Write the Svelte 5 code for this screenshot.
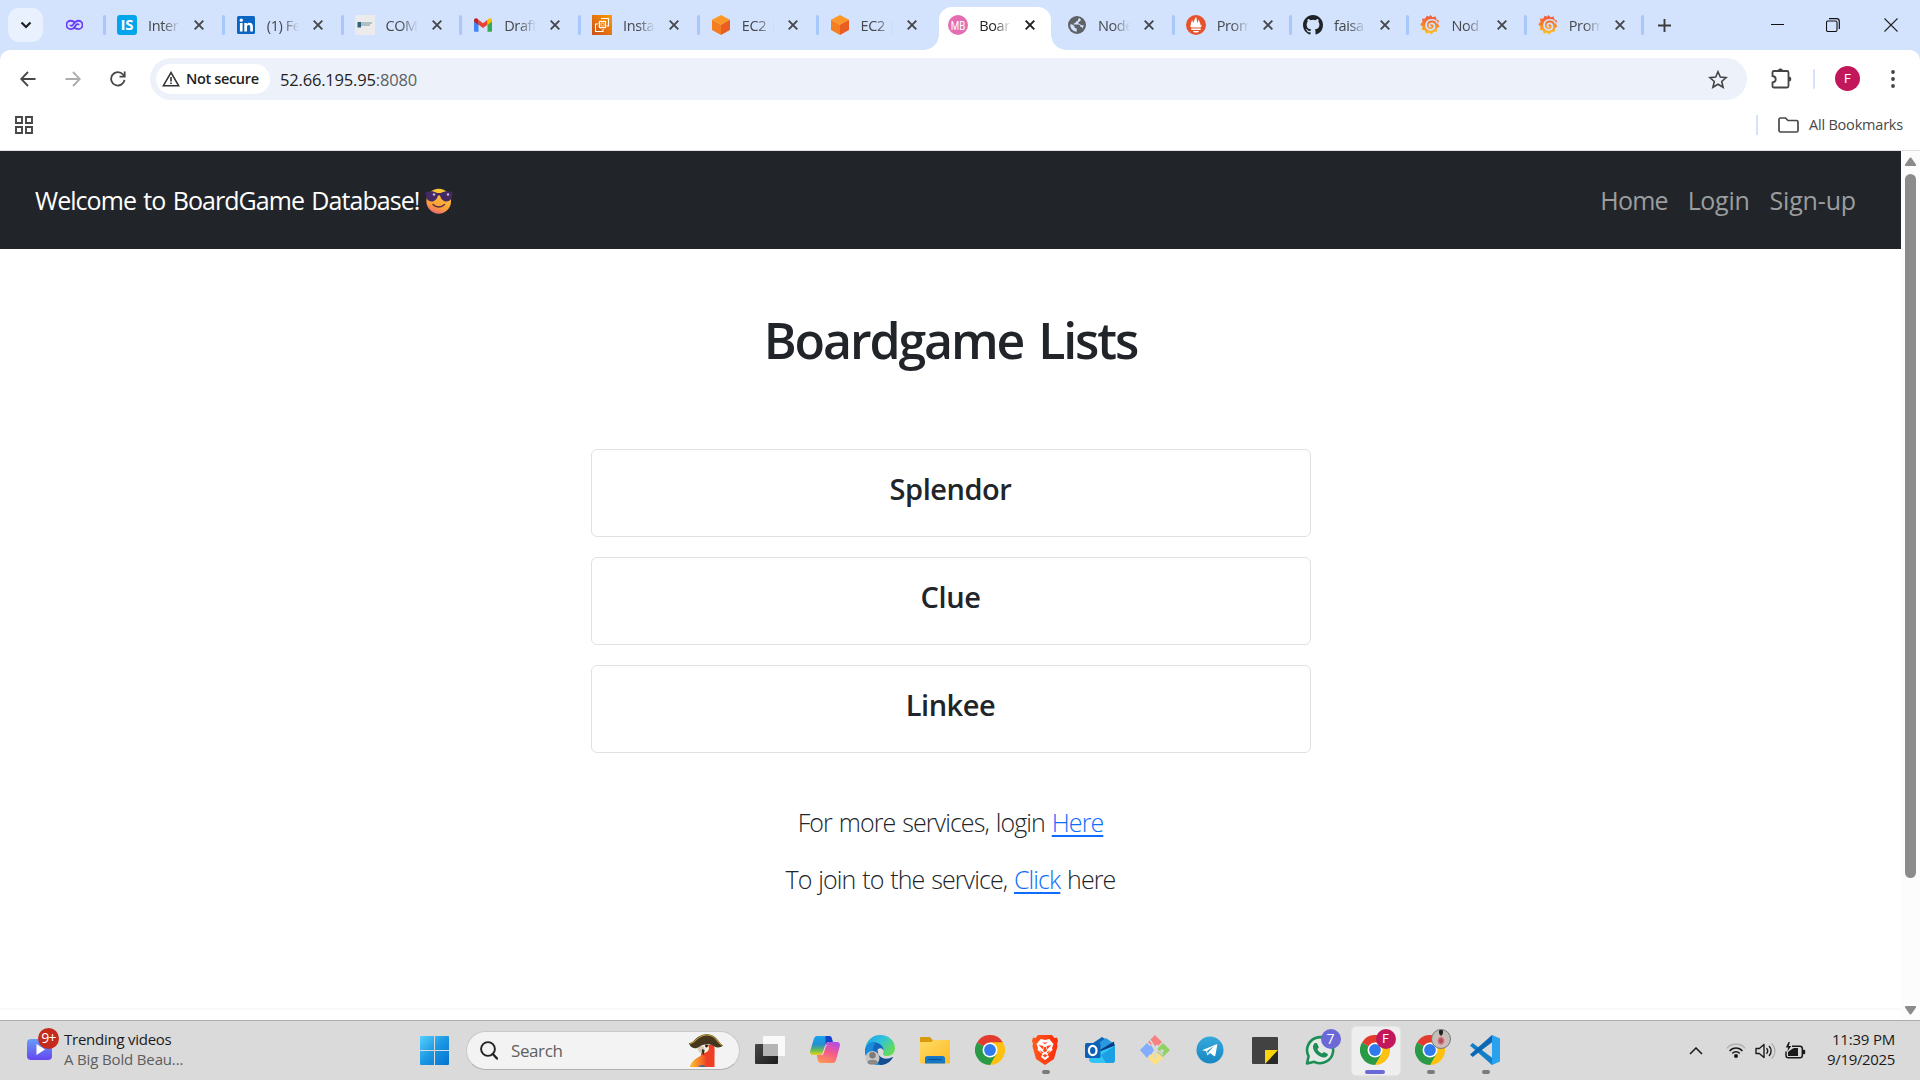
<script>
  const tabs = [
    { icon: 'is', title: 'Inter' },
    { icon: 'linkedin', title: '(1) Fe' },
    { icon: 'com', title: 'COM' },
    { icon: 'gmail', title: 'Draft' },
    { icon: 'insta', title: 'Insta' },
    { icon: 'ec2', title: 'EC2 |' },
    { icon: 'ec2', title: 'EC2 |' },
    { icon: 'mb', title: 'Boar', active: true },
    { icon: 'globe', title: 'Node', plain: true },
    { icon: 'prom', title: 'Prom' },
    { icon: 'github', title: 'faisa' },
    { icon: 'grafana', title: 'Nod' },
    { icon: 'grafana', title: 'Prom' }
  ];
  const narrowIcons = ['linkedin', 'gmail', 'ec2', 'globe'];
  const games = ['Splendor', 'Clue', 'Linkee'];
  const apps = [
    { icon: 'taskview' },
    { icon: 'copilot' },
    { icon: 'edge' },
    { icon: 'explorer' },
    { icon: 'chrome' },
    { icon: 'brave', running: true },
    { icon: 'outlook' },
    { icon: 'git' },
    { icon: 'telegram' },
    { icon: 'notes' },
    { icon: 'whatsapp', badge: '7', kind: 'count' },
    { icon: 'chrome', badge: 'F', kind: 'profile', active: true },
    { icon: 'chrome', badge: '', kind: 'photo', running: true },
    { icon: 'vscode', running: true }
  ];
</script>

{#snippet favicon(name)}
  <svg class="fav" viewBox={narrowIcons.includes(name) ? '-1 0 20 20' : '0 0 20 20'}>
    {#if name === 'is'}
      <rect width="20" height="20" rx="3" fill="#00a5ec" />
      <text x="10" y="15.3" class="is" text-anchor="middle">IS</text>
    {:else if name === 'linkedin'}
      <rect y="1" width="18" height="18" rx="1.5" fill="#0a66c2" />
      <circle cx="4.3" cy="5.2" r="1.6" fill="#fff" />
      <path d="M2.9 8h2.7v8.5H2.9zM7.3 8h2.6v1.2c1.4-2.3 6-2 6 2.2v5.1h-2.7v-4.6c0-2.5-3.2-2.4-3.2 0v4.6H7.3z" fill="#fff" />
    {:else if name === 'com'}
      <rect width="20" height="20" fill="#ebebeb" />
      <path d="M2.5 7h3.5v5.500h-3.500z" fill="#2d617d" />
      <path d="M6 8h11M6 10h9" stroke="#75919f" stroke-width="1" />
    {:else if name === 'gmail'}
      <path d="M0 4.5v11.2q0 1 1 1h3.5V8z" fill="#4285f4" />
      <path d="M18 4.5v11.2q0 1-1 1h-3.5V8z" fill="#34a853" />
      <path d="M4.5 4.8V9.8L9 13l4.5-3.2v-5L9 8.2z" fill="#ea4335" />
      <path d="M0 5.500v1L4.500 10V4.800L3.300 3.800C2 2.800 0 3.600 0 5.500" fill="#c5221f" />
      <path d="M18 5.500v1L13.500 10V4.800l1.200-1C16 2.800 18 3.600 18 5.500" fill="#fbbc04" />
    {:else if name === 'insta'}
      <rect width="20" height="20" fill="url(#awsGrad)" />
      <path d="M7.500 6.500h6v6h-6zM9 3.500h7.500V11h-2M6 9H3.500v7.500H11V14" fill="none" stroke="#fff" stroke-width="1.100" />
      <path d="M9 8h3v3H9zM9 5v1.500M12 5v1.500M9 12.500V14M12 12.500V14M6 8h1.500M6 11h1.500" fill="none" stroke="#fde3c3" stroke-width=".8" />
    {:else if name === 'ec2'}
      <path d="M9 0l9 4.800L9 9.800 0 4.800z" fill="#fd9827" />
      <path d="M0 4.800l9 5V20l-9-5z" fill="#f57f20" />
      <path d="M18 4.800l-9 5V20l9-5z" fill="#ea5f1f" />
    {:else if name === 'mb'}
      <circle cx="10" cy="10" r="10" fill="#e56db1" />
      <text x="10" y="14.700" class="mb" text-anchor="middle" textLength="14.500" lengthAdjust="spacingAndGlyphs">MB</text>
    {:else if name === 'globe'}
      <circle cx="9" cy="10" r="9" fill="#5f6368" />
      <path d="M11.500 3.200c-1 .3-1.800 1-1.500 2-.2 1.200-2 .8-2.200 1.900C7.600 8.400 5.500 8 5.500 9.500h5c1.500 0 2 1.200 1.800 2.300 1.200 0 2 .5 2 1.700.8-1 1.300-2.200 1.300-3.500-1.400.6-2.600.3-3.300-.5-.8-1-2-.6-2-1.700 0-1.200 1.300-1 2-1.700.6-.7.800-1.800-.8-2.900M2.300 9.300c2.600.2 4.300 1.400 4.300 3 0 .9.900.8 1.700 1 .9.300.4 2 .3 3.500C5 16.500 2 13.500 2.300 9.300" fill="#d3e3fd" />
    {:else if name === 'prom'}
      <circle cx="10" cy="10" r="10" fill="#e6522c" />
      <path d="M5 10.500C4.300 8 5.800 7 6 5c.8.800 1 2 .9 3C8 6.500 8.300 4.500 10 1.900c1 2 .6 4 1.700 6.100.5-1.100.2-2.500 1.200-3.600-.1 2.400 2.100 3.600 1.600 6.100l1.500-.4c-.2 1-.7 1.700-1.300 2.400H5.300C4.700 11.900 4.200 11.200 4 10zM5.300 13.500h9.400v1.500H5.300zM7 16h6c-.4 2.100-5.600 2.100-6 0" fill="#fff" />
    {:else if name === 'github'}
      <path transform="scale(1.250)" fill="#1f2328" d="M8 0C3.580 0 0 3.580 0 8c0 3.540 2.290 6.530 5.470 7.590.4.070.55-.17.550-.38 0-.19-.01-.82-.01-1.490-2.010.37-2.530-.49-2.690-.94-.09-.23-.48-.94-.82-1.130-.28-.15-.68-.52-.01-.53.630-.01 1.080.58 1.230.82.720 1.210 1.870.87 2.330.66.070-.52.280-.87.510-1.070-1.780-.2-3.640-.89-3.640-3.950 0-.87.310-1.590.82-2.150-.08-.2-.36-1.020.08-2.120 0 0 .67-.21 2.200.82a7.640 7.640 0 0 1 4 0c1.530-1.040 2.200-.82 2.200-.82.440 1.100.16 1.920.08 2.120.51.560.82 1.270.82 2.150 0 3.070-1.870 3.750-3.650 3.950.29.250.54.730.54 1.480 0 1.070-.01 1.930-.01 2.200 0 .21.150.46.550.38A8.010 8.010 0 0 0 16 8c0-4.420-3.580-8-8-8" />
    {:else if name === 'grafana'}
      <path d="M10.500 0l2 2.200 3.300-.8.600 3.200 2.800 1.200-1.300 3 1.600 2.800-2.600 1.800-.1 3.300-3.300.1-1.900 2.900-2.700-1.900-3.100.9-.9-3.100-3.200-.9.900-3L.200 9.200l2.300-2.100L2 3.800l3.300-.3 1.500-2.700 2.400 1z" fill="url(#grafGrad)" />
      <path d="M17.500 8.500C16 3.800 8 3.200 6.300 8.500c-1.300 4.500 2.500 7.300 5.600 6.200 4-1.500 2.900-6.600-.7-6.200-2.600.4-2.300 3.600.1 3.500" fill="none" stroke="#d3e3fd" stroke-width="1.700" />
    {/if}
  </svg>
{/snippet}

{#snippet appIcon(name)}
  <svg class="app-svg" viewBox="0 0 30 30">
    {#if name === 'taskview'}
      <rect y="9" width="23" height="20" rx="1" fill="url(#tvDark)" />
      <rect x="8" y="1" width="22" height="20" rx="1" fill="#fff" fill-opacity=".82" />
      <path d="M8 9h15v12H8z" fill="#b5b5b5" />
    {:else if name === 'copilot'}
      <path d="M7 1h12c2 0 2.500 1 3 3l.8 3h-4c-2 0-3 1-3.500 3l-2.500 7c-.8 2.200-2 3-4 3H3c-2.500 0-3.500-2-2.700-4.500l3.400-11C4.300 2.200 5.300 1 7 1" fill="url(#coBlue)" />
      <path d="M15.500 1H19c2 0 2.500 1 3 3l.8 3H19c-2 0-3 1-3.500 3z" fill="#1742c9" />
      <path d="M23 28H11c-2 0-2.700-1-3.200-3l-1-5H9c2 0 3.200-.8 4-3l2.500-7C16 8 17 7 19 7h8c2.500 0 3.400 2 2.700 4.500l-3.400 12.800C25.700 26.700 25 28 23 28" fill="url(#coPink)" />
      <path d="M16.200 10h1.800c-1 0-2 .8-2.400 2l-2.300 7c-.3.800-1.300 1.200-2 1.200h-1c1.200-.4 2-1 2.500-2.500l2.100-6z" fill="#eee" />
    {:else if name === 'edge'}
      <path d="M0 16C.5 6 7 0 15.300 0 24 0 30 6 30 13c0 5-3.500 8-7.700 8-3.800 0-5-1.500-4-3 1-2-.2-6.500-6-7.500C7 10 3 12 0 16" fill="url(#edgeTop)" />
      <path d="M0 16C1 8.500 7 6.500 11 7.500c4.500 1 8 4.500 7.400 8.300-1-3.300-4-3-5.500-1.500-4 4.500 2 11.500 9 10.500C18 31.500 8 31.500 3.500 25 1 21.500 0 19 0 16" fill="#1267bd" />
      <path d="M0 16C1 8.500 7 6.500 11 7.500 8 10 7.500 15 8.500 19c1 4.500 3.500 8 7 10.900C7 30.500 0 24 0 16" fill="#198bd9" />
      <path d="M13 15c-1.500 5 4 9.500 10 8.500 3-.5 4.500-2.200 5-1.300-2.500 5-7.500 7.800-13 7.800-5-4-6-12-2-15" fill="#124e91" />
      <circle cx="7.500" cy="23" r="7" fill="#c6c6c6" /><circle cx="7.500" cy="20.300" r="3.200" fill="#7e7a78" />
      <path d="M2.500 28v-1c0-3 10-3 10 0v1c-2 2-8 2-10 0" fill="#8c8886" />
    {:else if name === 'explorer'}
      <path d="M0 3q0-1 1-1h9l3 3.500V10H0z" fill="#d99a0b" />
      <path d="M0 8q0-1 1-1h10l3-2h15q1 0 1 1v21.500q0 1-1 1H1q-1 0-1-1z" fill="url(#folderGrad)" />
      <path d="M5 28.500v-5q0-2.500 2.500-2.500h15q2.500 0 2.500 2.500v5z" fill="#1478c7" />
      <path d="M8.500 24.500h13" stroke="#0b4f91" stroke-width="1.200" />
    {:else if name === 'chrome'}
      <path d="M15 15L2 7.500A15 15 0 0 1 28 7.500z" fill="#e33b2e" />
      <path d="M15 15V7.500h13A15 15 0 0 1 15 30z" fill="#fdc210" />
      <path d="M15 15l6.500 3.800L15 30A15 15 0 0 1 2 7.500z" fill="#2a9a47" />
      <path d="M15 7.500h13l-7 9z" fill="#fdc210" />
      <circle cx="15" cy="15" r="7.500" fill="#fff" /><circle cx="15" cy="15" r="5.900" fill="#2f7bed" />
    {:else if name === 'brave'}
      <path d="M8 0h14l2.500 3 2.500-.4L28 6l-1 3 .6 2-3.600 13-9 6-9-6L2.400 11 3 9 2 6l1-3.400L5.500 3z" fill="url(#braveGrad)" />
      <path d="M15 5l4.200-1 4.300 5-1.500 4 .5 2-5 4 1.500 3-4 3-4-3 1.500-3-5-4 .5-2-1.500-4 4.300-5z" fill="#fff" />
      <path d="M8.500 10l5 1-.7 3.200zM21.500 10l-5 1 .7 3.200zM12 7.500L15 9l3-1.500M14 12h2l1 4-2 1.200L13 16zM9.500 15l4 2.500-1.500 1zM20.500 15l-4 2.500 1.500 1zM12.500 20.500L15 19l2.500 1.500L15 22.500z" fill="#ff4518" />
    {:else if name === 'outlook'}
      <path d="M5 10L17 2l13 8v10H5z" fill="#0d65b8" />
      <path d="M15 7l6-4 7 5-13 8z" fill="#299ae0" /><path d="M15 15L29 6.500l1 9L18 21z" fill="#0a3a84" />
      <path d="M4 20l12-4 14-5.500V25q0 3-3 3H9q-5 0-5-4z" fill="#30c5f4" /><path d="M16 20l14-9v14q0 3-3 3h-6z" fill="#1c9fe3" />
      <rect y="8" width="15.500" height="15" rx="1.500" fill="#0f61b5" />
      <ellipse cx="7.700" cy="15.500" rx="3.800" ry="4.600" fill="none" stroke="#fff" stroke-width="2.200" />
    {:else if name === 'git'}
      <path d="M15 0l7 7-4 4-1-2-2 3-3-3-1 1-3-3z" fill="#f58181" />
      <path d="M7 8l3 3 1-1 3 5-3 5-1-1-3 4-7-8z" fill="#82adfd" />
      <path d="M23 8l7 7-7 7-6-5 1-4z" fill="#8fd264" />
      <path d="M15 17l3 3 1-1 4 4-8 7-7-7 4-4z" fill="#fde07f" />
      <path d="M10 5l6 9 7 6M15 13v11" stroke="#d9d9d9" stroke-width="1.500" fill="none" />
      <circle cx="15" cy="13" r="2" fill="#d9d9d9" /><circle cx="22" cy="16" r="1.700" fill="#d9d9d9" /><circle cx="15" cy="22" r="1.700" fill="#d9d9d9" />
    {:else if name === 'telegram'}
      <circle cx="15" cy="15" r="13.500" fill="url(#tgGrad)" />
      <path d="M7 15.200L21.500 9.300q1-.3.800.8L20.300 20.500q-.3 1-1.300.4l-4-3-2 2q-.8.600-1-.4l-.8-3.500zM12 16l7-5-5.500 6-.4 2.500z" fill="#fff" fill-rule="evenodd" />
    {:else if name === 'notes'}
      <path d="M3 2h24q1 0 1 1v25q0 1-1 1H3q-1 0-1-1V3q0-1 1-1" fill="#424242" />
      <path d="M28 15v13q0 1-1 1H15z" fill="#292929" /><path d="M15 15h13L15 29z" fill="#fad60a" />
    {:else if name === 'whatsapp'}
      <path d="M2 28.500l1.600-7.300A13 13 0 1 1 9.300 26.800z" fill="#e4e9e5" stroke="#1c8d55" stroke-width="2.600" stroke-linejoin="round" />
      <path d="M9.500 8l2.500.3 1.800 4-1.400 2c1 2 2.600 3.500 4.700 4.300l1.800-1.600 4 2c.2 2.200-2.200 3.800-4.400 3.500C12.500 21.700 7.500 16 8 11z" fill="#1c8d55" />
    {:else if name === 'vscode'}
      <path d="M0 10.500L2.700 8 25 25l-3 5z" fill="#127fc7" /><path d="M0 19.500L2.700 22 25 5l-3-5z" fill="#0c68b4" />
      <path d="M22 0l8 3.500v23L22 30V0" fill="#28a2ef" />
    {/if}
  </svg>
{/snippet}

<svg class="defs" width="0" height="0">
  <defs>
    <linearGradient id="awsGrad" x1="0" y1="1" x2="1" y2="0"><stop offset="0" stop-color="#c8511b" /><stop offset="1" stop-color="#f90" /></linearGradient>
    <linearGradient id="grafGrad" x1="0" y1="0" x2="0" y2="1"><stop offset="0" stop-color="#f2513b" /><stop offset=".5" stop-color="#f7852d" /><stop offset="1" stop-color="#fdc921" /></linearGradient>
    <linearGradient id="tvDark" x1="0" y1="0" x2="1" y2="1"><stop offset="0" stop-color="#484848" /><stop offset="1" stop-color="#1c1c1c" /></linearGradient>
    <linearGradient id="coBlue" x1="0" y1="0" x2="0" y2="1"><stop offset="0" stop-color="#19a5f0" /><stop offset=".45" stop-color="#258fd0" /><stop offset=".75" stop-color="#67bb55" /><stop offset="1" stop-color="#efd30d" /></linearGradient>
    <linearGradient id="coPink" x1=".7" y1="0" x2=".3" y2="1"><stop offset="0" stop-color="#b64ee4" /><stop offset=".45" stop-color="#f2588e" /><stop offset="1" stop-color="#ff9456" /></linearGradient>
    <linearGradient id="edgeTop" x1="0" y1="0" x2="1" y2=".6"><stop offset="0" stop-color="#1d9de2" /><stop offset=".5" stop-color="#2fc2df" /><stop offset="1" stop-color="#65dc57" /></linearGradient>
    <linearGradient id="folderGrad" x1="0" y1="0" x2="1" y2="1"><stop offset="0" stop-color="#ffdb63" /><stop offset="1" stop-color="#fdbb27" /></linearGradient>
    <linearGradient id="braveGrad" x1="0" y1="0" x2="1" y2="0"><stop offset="0" stop-color="#ff5a1c" /><stop offset="1" stop-color="#fc2c0d" /></linearGradient>
    <linearGradient id="tgGrad" x1="0" y1="0" x2="0" y2="1"><stop offset="0" stop-color="#35a9db" /><stop offset="1" stop-color="#1886c2" /></linearGradient>
    <linearGradient id="winGrad" x1="0" y1="0" x2="29" y2="29" gradientUnits="userSpaceOnUse"><stop offset="0" stop-color="#55d0fd" /><stop offset=".5" stop-color="#1b97e3" /><stop offset="1" stop-color="#0470cf" /></linearGradient>
    <linearGradient id="vidGrad" x1="0" y1="0" x2="0" y2="1"><stop offset="0" stop-color="#669df8" /><stop offset="1" stop-color="#6547ef" /></linearGradient>
    <linearGradient id="faceGrad" x1=".7" y1="0" x2=".3" y2="1"><stop offset="0" stop-color="#ffcf35" /><stop offset=".7" stop-color="#fb9d3b" /><stop offset="1" stop-color="#e8647b" /></linearGradient>
    <linearGradient id="wingGrad" x1="0" y1="0" x2="1" y2="0"><stop offset="0" stop-color="#fbc22b" /><stop offset=".6" stop-color="#f5782a" /><stop offset="1" stop-color="#e93a22" /></linearGradient>
  </defs>
</svg>

<div class="screen">
  <header class="tabstrip">
    <button class="tab-search" aria-label="Search tabs">
      <svg width="12" height="8" viewBox="0 0 12 8"><path d="M1.500 1.500L6 6l4.500-4.500" fill="none" stroke="#1f1f1f" stroke-width="2.200" /></svg>
    </button>
    <div class="pinned">
      <svg width="17" height="12" viewBox="0 0 18 12"><path d="M9.500 3.500C8 2 6.500 1.500 5 1.500a4.400 4.400 0 0 0 0 8.900c3.500 0 4.500-3 6-4.700.8-.9 2.500-.8 2.500.5M8.500 8.300c1.300 1.500 2.800 2.100 4.500 2.100a4.400 4.400 0 0 0 0-8.900C9.500 1.500 8.500 4.500 7 6.200c-.8.900-2.500.8-2.500-.5" fill="none" stroke="#6a3df5" stroke-width="1.900" /></svg>
    </div>
    {#each tabs as tab, i}
      <div class="tab" class:active={tab.active} class:plain={tab.plain} class:narrow={i > 8}>
        <i class="sep"></i>
        {@render favicon(tab.icon)}
        <span class="tab-title">{tab.title}</span>
        <svg class="close" viewBox="0 0 10 10"><path d="M.7.700l8.600 8.600M9.300.700L.7 9.300" stroke="currentColor" stroke-width="1.900" /></svg>
      </div>
    {/each}
    <i class="sep last"></i>
    <svg class="plus" viewBox="0 0 13 13"><path d="M6.500 0v13M0 6.500h13" stroke="#3c3c3c" stroke-width="1.900" /></svg>
    <div class="window-controls">
      <svg width="13" height="13" viewBox="0 0 13 13"><path d="M0 5.500h13" stroke="#111" /></svg>
      <svg width="14" height="14" viewBox="0 0 14 14"><rect x=".5" y="3" width="10.500" height="10.500" rx="1.500" fill="none" stroke="#111" stroke-width="1.100" /><path d="M3 .7h7.500q2.800 0 2.800 2.800V11" fill="none" stroke="#111" stroke-width="1.200" /></svg>
      <svg width="14" height="14" viewBox="0 0 14 14"><path d="M.5.500l13 13M13.500.500l-13 13" stroke="#222" stroke-width="1.100" /></svg>
    </div>
  </header>

  <div class="chrome-bg">
    <div class="toolbar">
      <svg class="nav-ic" viewBox="0 0 16 16"><path d="M15.500 8H1.500M8 1L1.200 8 8 15" fill="none" stroke="#474747" stroke-width="1.800" /></svg>
      <svg class="nav-ic" viewBox="0 0 16 16"><path d="M.5 8h14M8 1l6.800 7L8 15" fill="none" stroke="#adadad" stroke-width="1.800" /></svg>
      <svg class="nav-ic reload" viewBox="0 0 16 16"><path d="M14.500 8.800A6.700 6.700 0 1 1 13 3.500l1.500 1.700M14.700.500v5.200H9.500" fill="none" stroke="#474747" stroke-width="1.800" /></svg>
      <div class="omnibox">
        <div class="chip">
          <svg width="18" height="16" viewBox="0 0 18 16"><path d="M9 1.500L16.700 14.800H1.300z" fill="none" stroke="#333" stroke-width="1.500" /><path d="M9 6v4.500M9 11.500V13" stroke="#333" stroke-width="1.600" /></svg>
          <span>Not secure</span>
        </div>
        <span class="url">52.66.195.95<em>:8080</em></span>
        <svg class="star" viewBox="0 0 20 19"><path d="M10 1.700l2.300 5.400 5.900.5-4.500 3.900 1.400 5.800-5.100-3.100-5.100 3.100 1.400-5.800L1.800 7.600l5.900-.5z" fill="none" stroke="#444" stroke-width="1.600" /></svg>
      </div>
      <svg class="puzzle" viewBox="0 0 21 21"><path d="M1.500 4.500q0-1.500 1.500-1.500h13q1.500 0 1.500 1.500v13.500q0 1.500-1.500 1.500H3Q1.500 19.500 1.500 18v-3.500c4.300-.5 4.300-6 0-6.500z" fill="none" stroke="#444" stroke-width="1.800" /><path d="M6.800 3a2.600 2.600 0 0 1 5.200 0zM17.800 8.500a2.500 2.500 0 0 1 0 5z" fill="#444" /></svg>
      <i class="tool-sep"></i>
      <div class="avatar">F</div>
      <svg class="dots" viewBox="0 0 4 18"><circle cx="2" cy="2" r="1.900" /><circle cx="2" cy="9" r="1.900" /><circle cx="2" cy="16" r="1.900" /></svg>
    </div>
    <div class="bookmarks">
      <svg class="apps-grid" viewBox="0 0 18 18"><path d="M1 1h6v6H1zM11 1h6v6h-6zM1 11h6v6H1zM11 11h6v6h-6z" fill="none" stroke="#474747" stroke-width="1.900" /></svg>
      <i class="bm-sep"></i>
      <svg class="folder" viewBox="0 0 21 16"><path d="M1 2.500Q1 1 2.500 1h5L10 3.500h8.500q1.500 0 1.500 1.500v8.500q0 1.500-1.500 1.500h-16Q1 15 1 13.500z" fill="none" stroke="#474747" stroke-width="1.700" /></svg>
      <span>All Bookmarks</span>
    </div>
  </div>

  <div class="viewport">
    <div class="page">
      <nav class="navbar">
        <div class="brand">
          <span>Welcome to BoardGame Database!</span>
          <svg class="cool" viewBox="0 0 28 26"><ellipse cx="13.700" cy="13.200" rx="12.300" ry="12.500" fill="url(#faceGrad)" />
            <path d="M.5 4.500C4 2.700 9 3.200 12 5h4c3-1.800 8-2.300 11.500-.5 0 5-2 9-6 9-3.500 0-5.500-2.500-6.500-6h-2c-1 3.500-3 6-6.500 6-4 0-6-4-6-9" fill="#432a62" />
            <path d="M8 16.500c3 3.300 8.500 3.300 11.500 0" fill="none" stroke="#533044" stroke-width="1.400" stroke-linecap="round" />
            <circle cx="9" cy="6.500" r="1.200" fill="#cbb9df" /><circle cx="23" cy="6.500" r="1.200" fill="#cbb9df" /></svg>
        </div>
        <div class="links"><a href="#home" class="l-home">Home</a><a href="#login">Login</a><a href="#signup" class="l-sign">Sign-up</a></div>
      </nav>
      <main>
        <h1>Boardgame Lists</h1>
        <div class="cards">
          {#each games as game}
            <div class="card">{game}</div>
          {/each}
        </div>
        <p class="lead first">For more services, login <a href="#here">Here</a></p>
        <p class="lead second">To join to the service, <a href="#click">Click</a> here</p>
      </main>
      <div class="page-end"></div>
    </div>
    <div class="scrollbar">
      <svg width="13" height="10" viewBox="0 0 13 10"><path d="M6.500.500q.7 0 1.300 1L12 7.500q.7 1.500-1 1.500H2Q.3 9 1 7.500l4.200-6q.6-1 1.300-1" fill="#8b8b8b" /></svg>
      <div class="thumb"></div>
      <svg class="down" width="13" height="10" viewBox="0 0 13 10"><path d="M6.500 9.500q.7 0 1.300-1L12 2.500Q12.700 1 11 1H2Q.3 1 1 2.500l4.200 6q.6 1 1.300 1" fill="#8b8b8b" /></svg>
    </div>
  </div>

  <footer class="taskbar">
    <div class="widget">
      <div class="video">
        <svg width="25" height="21" viewBox="0 0 25 21"><rect width="25" height="21" rx="4" fill="url(#vidGrad)" /><path d="M9.500 5l8.500 5.500L9.500 16z" fill="#fff" /></svg>
        <b>9+</b>
      </div>
      <div class="news"><span class="n1">Trending videos</span><span class="n2">A Big Bold Beau...</span></div>
    </div>
    <svg class="start" viewBox="0 0 29 29"><path d="M1 0h13v14H0V1q0-1 1-1M15 0h13q1 0 1 1v13H15zM0 15h14v14H1q-1 0-1-1zM15 15h14v13q0 1-1 1H15z" fill="url(#winGrad)" /></svg>
    <div class="search">
      <svg class="mag" viewBox="0 0 18 19"><circle cx="8" cy="8" r="6.900" fill="none" stroke="#222" stroke-width="1.900" /><path d="M12.800 13l4.200 4.500" stroke="#222" stroke-width="2.400" stroke-linecap="round" /></svg>
      <span>Search</span>
      <svg class="parrot" viewBox="0 0 34 34">
        <path d="M12 11h13c1 4 .5 8 .5 12V33H10C6 33 3 32 1 33c2-6 7-8 11-11z" fill="#ed3f24" />
        <path d="M1 33c2-7 7-9 12-12 6 1 7 6 4 12z" fill="url(#wingGrad)" />
        <path d="M9 32.500c3-2 6-1.500 8 .5z" fill="#2362a9" />
        <path d="M12 11c3-1.500 8-1 8 3 0 3-3 5-6 5-3-1-3-6-2-8" fill="#f6eee0" />
        <path d="M8.500 14c1-3 6-3 7 0 .5 3-.5 4.500-1 6-3-.5-6-3-6-6" fill="#d8ccb4" /><path d="M13 15l2.500 1-.7 5-2-2z" fill="#3b332a" />
        <circle cx="17.500" cy="12" r="1.400" fill="#1d1a19" />
        <path d="M0 9c5 1 6-8 17.500-8.700C28 0 29 9 34 11.500c-3 2.500-6 2.500-9 .7-4-2.700-11-2.700-15 .7C5 16 1 13 0 9" fill="#44361f" />
        <path d="M.7 9.500C6 10 7.500 1.500 17.500 1 27 .800 28 9 33 11.400" fill="none" stroke="#bc9a32" stroke-width="1.100" />
      </svg>
    </div>
    <div class="apps">
      {#each apps as app}
        <div class="app" class:current={app.active}>
          {@render appIcon(app.icon)}
          {#if app.kind}<span class="badge {app.kind}">{app.badge}</span>{/if}
          {#if app.active || app.running}<i class="indicator"></i>{/if}
        </div>
      {/each}
    </div>
    <div class="tray">
      <svg width="14" height="8" viewBox="0 0 14 8"><path d="M1 7l6-6 6 6" fill="none" stroke="#1a1a1a" stroke-width="1.500" /></svg>
      <svg class="wifi" width="20" height="16" viewBox="0 0 20 16"><circle cx="10" cy="13" r="2" fill="#1a1a1a" /><path d="M6.300 10.500a5 5 0 0 1 7.400 0M3.600 8a8.500 8.500 0 0 1 12.800 0" fill="none" stroke="#1a1a1a" stroke-width="1.500" /><path d="M.8 5.300a12.300 12.300 0 0 1 18.400 0" fill="none" stroke="#aaa" stroke-width="1.200" /></svg>
      <svg class="vol" width="21" height="18" viewBox="0 0 21 18"><path d="M1 6.500h3.300L9 2.500v13l-4.700-4H1z" fill="none" stroke="#1a1a1a" stroke-width="1.400" stroke-linejoin="round" /><path d="M11.500 6.300a4 4 0 0 1 0 5.400M14 4a7 7 0 0 1 0 10" fill="none" stroke="#1a1a1a" stroke-width="1.400" /><path d="M16.500 1.500a10 10 0 0 1 0 15" fill="none" stroke="#aaa" stroke-width="1.200" /></svg>
      <svg class="bat" width="21" height="18" viewBox="0 0 21 18"><path d="M7 4.200h8q2.300 0 2.300 2.300v7q0 2.300-2.300 2.300H3.300Q1 15.800 1 13.500V9.500" fill="none" stroke="#1a1a1a" stroke-width="1.500" /><path d="M3 10l4-3L9 6h4v8H3zM18 7.800h1.200q1 0 1 1v2.500q0 1-1 1H18zM3.500 0L.8 5.500h2.400L2.300 9.500 6.300 4H3.700l1.200-4z" fill="#1a1a1a" /></svg>
      <div class="clock"><span class="c1">11:39 PM</span><span class="c2">9/19/2025</span></div>
    </div>
  </footer>
</div>

<style>
  :global(body) { margin: 0; overflow: hidden; }
  .screen { width: 1920px; height: 1080px; display: flex; flex-direction: column; background: #fff; font-family: 'Open Sans', 'Noto Sans', sans-serif; overflow: hidden; }
  .screen * { box-sizing: border-box; }
  svg { display: block; flex: none; }
  .defs { position: absolute; }

  .tabstrip { height: 50px; background: #d3e3fd; display: flex; align-items: center; flex: none; }
  .tab-search { width: 35px; height: 34px; margin-left: 8px; padding: 0; border: 0; border-radius: 11px; background: #e9f0fe; display: grid; place-items: center; }
  .pinned { width: 60px; padding-left: 23px; flex: none; }
  .tab { width: 118.750px; height: 50px; flex: none; display: flex; align-items: center; color: #45474a; position: relative; }
  .tab.narrow { width: 117.350px; }
  .sep { width: 3px; height: 20px; border-radius: 2px; background: #a8c7fa; flex: none; margin-bottom: 1px; }
  .tab.active .sep, .tab.plain .sep { background: transparent; }
  .fav { width: 20px; height: 20px; margin-left: 11px; z-index: 1; }
  .is { font: 700 15px 'Open Sans', sans-serif; fill: #fff; }
  .mb { font: 400 13px Roboto, sans-serif; fill: #fff; }
  .tab-title { width: 42px; margin: 1px 0 0 11px; flex: none; white-space: nowrap; font-size: 14.500px; letter-spacing: -.4px; line-height: 20px; z-index: 1; mask-image: linear-gradient(to right, #000 15px, transparent 32px); }
  .close { width: 10px; height: 10px; margin-left: 4px; z-index: 1; }
  .tab.active { color: #1f1f1f; }
  .tab.active::before { content: ''; position: absolute; left: 4.750px; top: 7px; width: 112px; height: 43px; border-radius: 13px 13px 0 0; background: #fff; }
  .tab.active::after { content: ''; position: absolute; left: -10px; bottom: 0; width: 142px; height: 15px; background: radial-gradient(circle at 0 0, transparent 14.500px, #fff 15px) left / 15px 15px no-repeat, radial-gradient(circle at 100% 0, transparent 14.500px, #fff 15px) right / 15px 15px no-repeat; }
  .plus { width: 13px; height: 13px; margin-left: 14px; }
  .window-controls { margin-left: auto; display: flex; gap: 44px; padding-right: 22px; align-items: center; }
  .window-controls svg:first-child { margin-right: -2px; }

  .chrome-bg { height: 101px; flex: none; background: #d3e3fd; border-bottom: 1px solid #dfe1e4; }
  .toolbar { height: 58px; background: #fff; border-radius: 10px 10px 0 0; display: flex; align-items: center; padding: 0 26px 0 20px; }
  .nav-ic { width: 16px; height: 16px; margin-right: 29px; }
  .reload { margin-right: 24px; }
  .omnibox { width: 1597px; height: 42px; border-radius: 21px; background: #ecf1fa; display: flex; align-items: center; padding: 0 19px 0 6px; }
  .chip { width: 114px; height: 30px; border-radius: 15px; background: #fff; display: flex; align-items: center; gap: 6px; padding: 0 0 1px 6px; font-size: 14.500px; font-weight: 600; color: #1f1f1f; letter-spacing: -.35px; white-space: nowrap; }
  .url { margin-left: 10px; font-size: 16.500px; letter-spacing: -.18px; color: #1f1f1f; white-space: nowrap; }
  .url em { font-style: normal; color: #5b5e63; }
  .star { width: 20px; height: 19px; margin-left: auto; }
  .puzzle { width: 21px; height: 21px; margin-left: 24px; margin-bottom: 1px; }
  .tool-sep { width: 2px; height: 20px; background: #d3e3fd; margin-left: 21px; border-radius: 1px; }
  .avatar { width: 25px; height: 25px; border-radius: 50%; background: #c2185b; color: #fff; display: grid; place-items: center; font: 13px Roboto, sans-serif; margin: 0 0 2px 20px; }
  .dots { width: 4px; height: 18px; margin: 0 -1px 1px auto; fill: #444; }
  .bookmarks { height: 42px; background: #fff; display: flex; align-items: center; padding: 0 17px 8px 15px; font-size: 14.500px; color: #474747; letter-spacing: -.2px; }
  .bookmarks span { margin-top: -1px; }
  .apps-grid { width: 18px; height: 18px; }
  .bm-sep { width: 2px; height: 20px; background: #d3e3fd; margin-left: auto; }
  .folder { width: 21px; height: 16px; margin: 0 10px 0 20px; }

  .viewport { height: 869px; display: flex; flex: none; }
  .page { width: 1901px; height: 869px; display: flex; flex-direction: column; }
  .navbar { height: 98px; background: #212529; display: flex; align-items: center; justify-content: space-between; padding: 0 45px 0 35px; flex: none; font-size: 25px; }
  .brand { display: flex; align-items: center; gap: 6px; color: #fff; letter-spacing: -.95px; word-spacing: 1.800px; white-space: nowrap; }
  .cool { width: 28px; height: 26px; margin-top: 2px; }
  .links { display: flex; gap: 20px; }
  .links a { color: #9b9d9e; text-decoration: none; letter-spacing: -.3px; }
  .links .l-home { letter-spacing: -.85px; }
  .links .l-sign { letter-spacing: -.15px; }
  main { display: flex; flex-direction: column; align-items: center; color: #212529; }
  h1 { margin: 61px 0 0; height: 60px; line-height: 60px; font-size: 50px; font-weight: 600; letter-spacing: -2.100px; word-spacing: 4px; white-space: nowrap; }
  .cards { margin-top: 79px; display: flex; flex-direction: column; gap: 20px; }
  .card { width: 720px; height: 88px; border: 1px solid #dee2e6; border-radius: 6px; padding-top: 21px; text-align: center; line-height: 36px; font-size: 29px; font-weight: 600; letter-spacing: -.45px; }
  .lead { margin: 0; height: 38px; line-height: 38px; font-size: 25px; font-weight: 300; white-space: pre; letter-spacing: -.9px; word-spacing: 1.200px; }
  .first { margin-top: 50px; }
  .second { margin-top: 19px; }
  .lead a { color: #0d6efd; text-decoration-thickness: 2px; text-underline-offset: 3px; }
  .page-end { margin-top: auto; height: 12px; border-top: 2px solid #f8f9fa; }
  .scrollbar { width: 19px; background: #fcfcfc; display: flex; flex-direction: column; align-items: center; padding: 6px 0 5px; }
  .thumb { width: 11px; height: 704px; border-radius: 6px; background: #8b8b8b; margin-top: 7px; }
  .down { margin-top: auto; }

  .taskbar { height: 60px; flex: none; background: #dadada; border-top: 1px solid #adadad; display: flex; align-items: center; position: relative; }
  .widget { width: 420px; display: flex; align-items: center; padding-left: 27px; flex: none; }
  .video { position: relative; width: 25px; height: 21px; margin-top: -3px; }
  .video b { position: absolute; left: 11px; top: -11px; width: 21px; height: 21px; border-radius: 50%; background: #c42b1c; color: #fff; font-size: 14px; font-weight: 400; line-height: 20px; text-align: center; letter-spacing: -.7px; }
  .news { margin: -4px 0 0 12px; display: flex; flex-direction: column; font-size: 15px; line-height: 20px; color: #1b1b1b; white-space: nowrap; }
  .n1 { letter-spacing: -.25px; }
  .n2 { color: #5d5d5d; letter-spacing: -.15px; }
  .start { width: 29px; height: 29px; }
  .search { width: 274px; height: 39px; margin-left: 17px; border-radius: 20px; background: #f3f3f3; border: 1px solid #c9c9c9; border-bottom-color: #b0b0b0; display: flex; align-items: center; padding: 0 16px 0 13px; font-size: 17px; color: #606060; flex: none; }
  .mag { width: 18px; height: 19px; margin-right: 13px; }
  .search span { letter-spacing: -.4px; }
  .parrot { width: 34px; height: 34px; margin-left: auto; }
  .apps { display: flex; margin-left: 2.500px; }
  .app { width: 55px; height: 59px; display: grid; place-items: center; position: relative; }
  .app-svg { width: 30px; height: 30px; z-index: 1; margin-top: -1px; }
  .current::before { content: ''; position: absolute; left: 3px; top: 5px; width: 48px; height: 48px; border-radius: 5px; background: #eeeeee; border: 1px solid #e4e4e4; }
  .badge { position: absolute; left: 28px; top: 8px; width: 20px; height: 20px; border-radius: 50%; z-index: 2; color: #fff; text-align: center; line-height: 20px; font-size: 14px; }
  .count { background: #6b69d6; }
  .profile { background: #c2185b; font: 12px/20px Roboto, sans-serif; }
  .photo { background: radial-gradient(ellipse at 50% 10%, #222 0 12%, transparent 20%), radial-gradient(ellipse at 50% 60%, #b0505a 0 12%, #d9b9b6 32%, #bfc0ba 55%); border: 1px solid #777; }
  .indicator { position: absolute; bottom: 6px; left: 24px; width: 8px; height: 4px; border-radius: 2px; background: #7b7b7b; }
  .current .indicator { left: 17px; width: 20px; background: #6b69d6; }
  .tray { margin-left: auto; display: flex; align-items: center; padding-right: 25px; }
  .wifi { margin-left: 23px; }
  .vol { margin-left: 9px; }
  .bat { margin-left: 9px; }
  .clock { width: 89px; display: flex; flex-direction: column; text-align: right; font-size: 15px; line-height: 20px; color: #1b1b1b; white-space: nowrap; margin-top: -4px; }
  .c1 { letter-spacing: -.2px; }
  .c2 { letter-spacing: -.35px; }
</style>
